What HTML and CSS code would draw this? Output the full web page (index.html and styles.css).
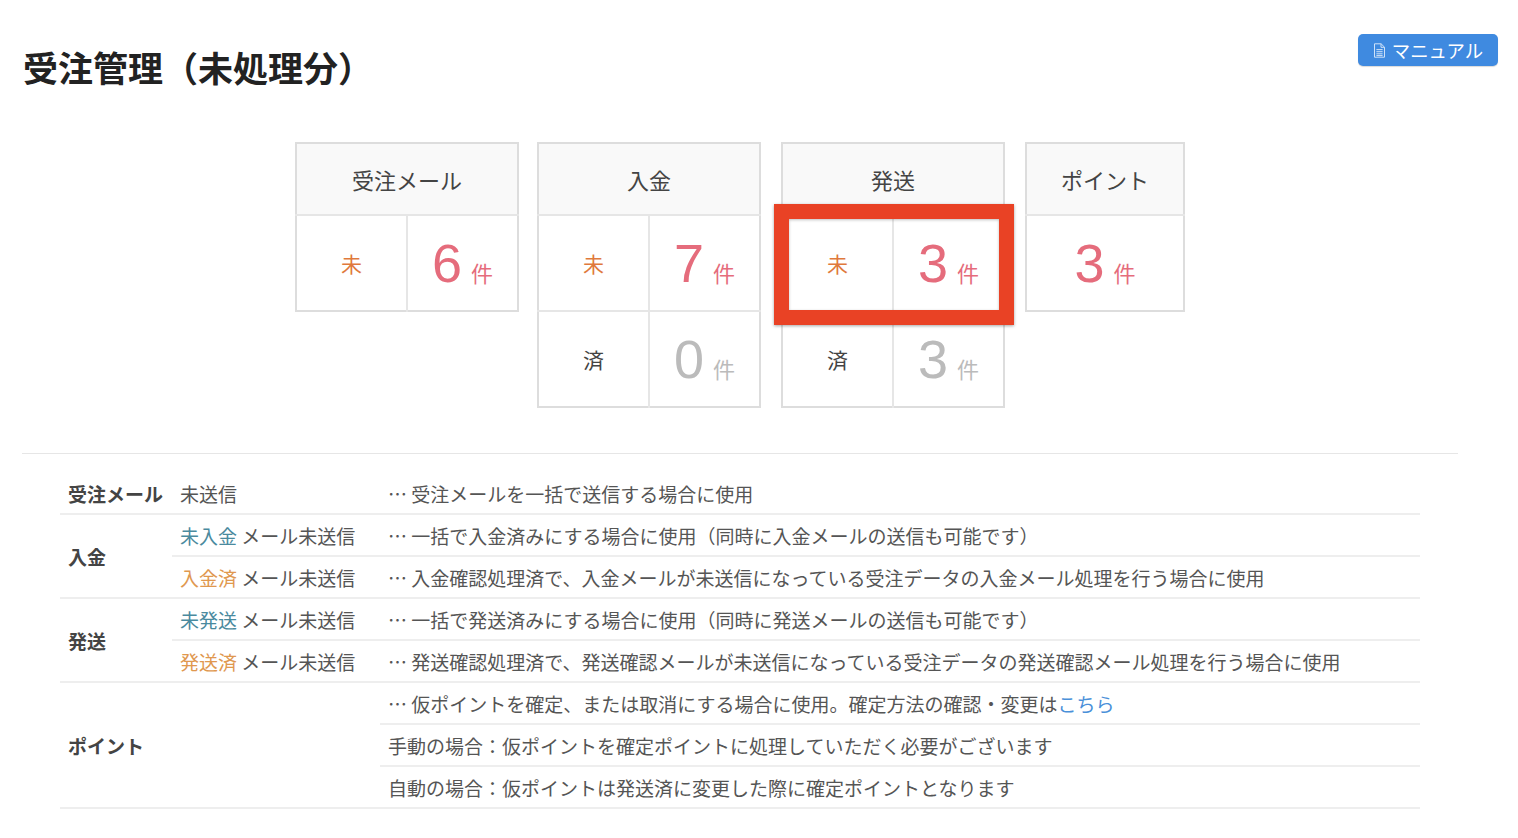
FILE: index.html
```html
<!DOCTYPE html>
<html lang="ja">
<head>
    <meta charset="UTF-8">
    <meta name="viewport" content="width=device-width, initial-scale=1.0">
    <title>受注管理（未処理分）</title>
    <link rel="stylesheet" href="styles.css">
</head>
<body>
<div class="page">
    <div class="page-head">
        <h1>受注管理（未処理分）</h1>
        <a class="manual-btn" href="#">
            <svg class="manual-icon" viewBox="0 0 13 15" width="13" height="15" aria-hidden="true">
                <path d="M1.5 .8h6.6l3.4 3.4v10h-10z M8 .8v3.5h3.5 M3.4 6.6h6.2 M3.4 8.7h6.2 M3.4 10.8h6.2 M3.4 12.6h6.2" fill="none" stroke="#cfe2f8" stroke-width="1"/>
            </svg>
            マニュアル
        </a>
    </div>

    <div class="cards">
        <table class="card">
            <tr><th colspan="2">受注メール</th></tr>
            <tr><td class="state todo">未</td><td class="count"><b>6</b><span>件</span></td></tr>
        </table>
        <table class="card card-gap">
            <tr><th colspan="2">入金</th></tr>
            <tr><td class="state todo">未</td><td class="count"><b>7</b><span>件</span></td></tr>
            <tr><td class="state">済</td><td class="count done"><b>0</b><span>件</span></td></tr>
        </table>
        <div class="card-wrap">
            <table class="card">
                <tr><th colspan="2">発送</th></tr>
                <tr><td class="state todo">未</td><td class="count"><b>3</b><span>件</span></td></tr>
                <tr><td class="state">済</td><td class="count done"><b>3</b><span>件</span></td></tr>
            </table>
            <div class="highlight"></div>
        </div>
        <table class="card card-point">
            <tr><th>ポイント</th></tr>
            <tr><td class="count"><b>3</b><span>件</span></td></tr>
        </table>
    </div>

    <hr class="divider">

    <table class="legend">
        <tr>
            <th>受注メール</th>
            <td class="kind">未送信</td>
            <td class="desc">… 受注メールを一括で送信する場合に使用</td>
        </tr>
        <tr>
            <th rowspan="2">入金</th>
            <td class="kind"><span class="teal">未入金</span> メール未送信</td>
            <td class="desc">… 一括で入金済みにする場合に使用（同時に入金メールの送信も可能です）</td>
        </tr>
        <tr>
            <td class="kind"><span class="orange">入金済</span> メール未送信</td>
            <td class="desc">… 入金確認処理済で、入金メールが未送信になっている受注データの入金メール処理を行う場合に使用</td>
        </tr>
        <tr>
            <th rowspan="2">発送</th>
            <td class="kind"><span class="teal">未発送</span> メール未送信</td>
            <td class="desc">… 一括で発送済みにする場合に使用（同時に発送メールの送信も可能です）</td>
        </tr>
        <tr>
            <td class="kind"><span class="orange">発送済</span> メール未送信</td>
            <td class="desc">… 発送確認処理済で、発送確認メールが未送信になっている受注データの発送確認メール処理を行う場合に使用</td>
        </tr>
        <tr>
            <th rowspan="3" colspan="2">ポイント</th>
            <td class="desc">… 仮ポイントを確定、または取消にする場合に使用。確定方法の確認・変更は<a href="#">こちら</a></td>
        </tr>
        <tr><td class="desc">手動の場合：仮ポイントを確定ポイントに処理していただく必要がございます</td></tr>
        <tr><td class="desc">自動の場合：仮ポイントは発送済に変更した際に確定ポイントとなります</td></tr>
    </table>
</div>
</body>
</html>
```

FILE: styles.css
```css
html, body { margin: 0; padding: 0; }
body {
    background-color: #fff;
    color: #444;
    font-family: "Noto Sans CJK JP", "Liberation Sans", sans-serif;
    overflow: hidden;
}
.page { padding: 34px 60px 0 22px; }

.page-head { display: flex; justify-content: space-between; align-items: flex-start; margin-right: -40px; height: 108px; }
h1 { margin: 8px 0 0 1px; font-size: 35px; line-height: 50px; font-weight: 700; color: #222; }
.manual-btn {
    display: flex; align-items: center; justify-content: center; gap: 6px;
    box-sizing: border-box; width: 140px; height: 32px;
    background-color: #3f8ae0; border-radius: 5px;
    color: #fff; font-size: 18.4px; text-decoration: none;
    box-shadow: 0 1px 1px rgba(0, 0, 0, 0.15);
}
.manual-icon { flex: none; }

.cards { display: flex; justify-content: center; align-items: flex-start; gap: 20px; }
.card { border-collapse: collapse; border: 2px solid #ddd; width: 224px; table-layout: fixed; }
.card-gap { margin-left: -2px; }
.card-point { width: 160px; }
.card th {
    height: 70px; padding: 0; background-color: #f9f9f9;
    border-bottom: 2px solid #e6e6e6;
    font-size: 22px; font-weight: 400; color: #444;
}
.card td { height: 94px; padding: 0; text-align: center; border-top: 2px solid #e6e6e6; }
.state { width: 90px; border-right: 2px solid #e6e6e6; font-size: 21px; color: #444; }
.state.todo { color: #e0793c; }
.count { color: #e56c7c; font-size: 22px; }
.count b { font-family: "Liberation Sans", sans-serif; font-size: 54px; font-weight: 400; margin-right: 9px; line-height: 54px; }
.count.done { color: #bbb; }

.card-wrap { position: relative; }
.highlight {
    position: absolute; left: -7px; top: 62px;
    width: 240px; height: 121px; box-sizing: border-box;
    border: 15px solid #e94225;
    box-shadow: 0 1px 3px rgba(0, 0, 0, 0.35), inset 0 1px 3px rgba(0, 0, 0, 0.25);
}

.divider { margin: 45px 0 19px; border: 0; border-top: 1px solid #e6e6e6; }

.legend { border-collapse: collapse; margin: 0 38px; width: 1360px; table-layout: fixed; font-size: 19px; color: #555; }
.legend th, .legend td { height: 40px; padding: 0 0 0 8px; border-bottom: 2px solid #eee; text-align: left; white-space: nowrap; }
.legend th { width: 104px; font-weight: 700; color: #444; }
.legend .kind { width: 200px; }
.teal { color: #4a8a9e; }
.orange { color: #e0984f; }
.legend a { color: #4a90d9; text-decoration: none; }
```
